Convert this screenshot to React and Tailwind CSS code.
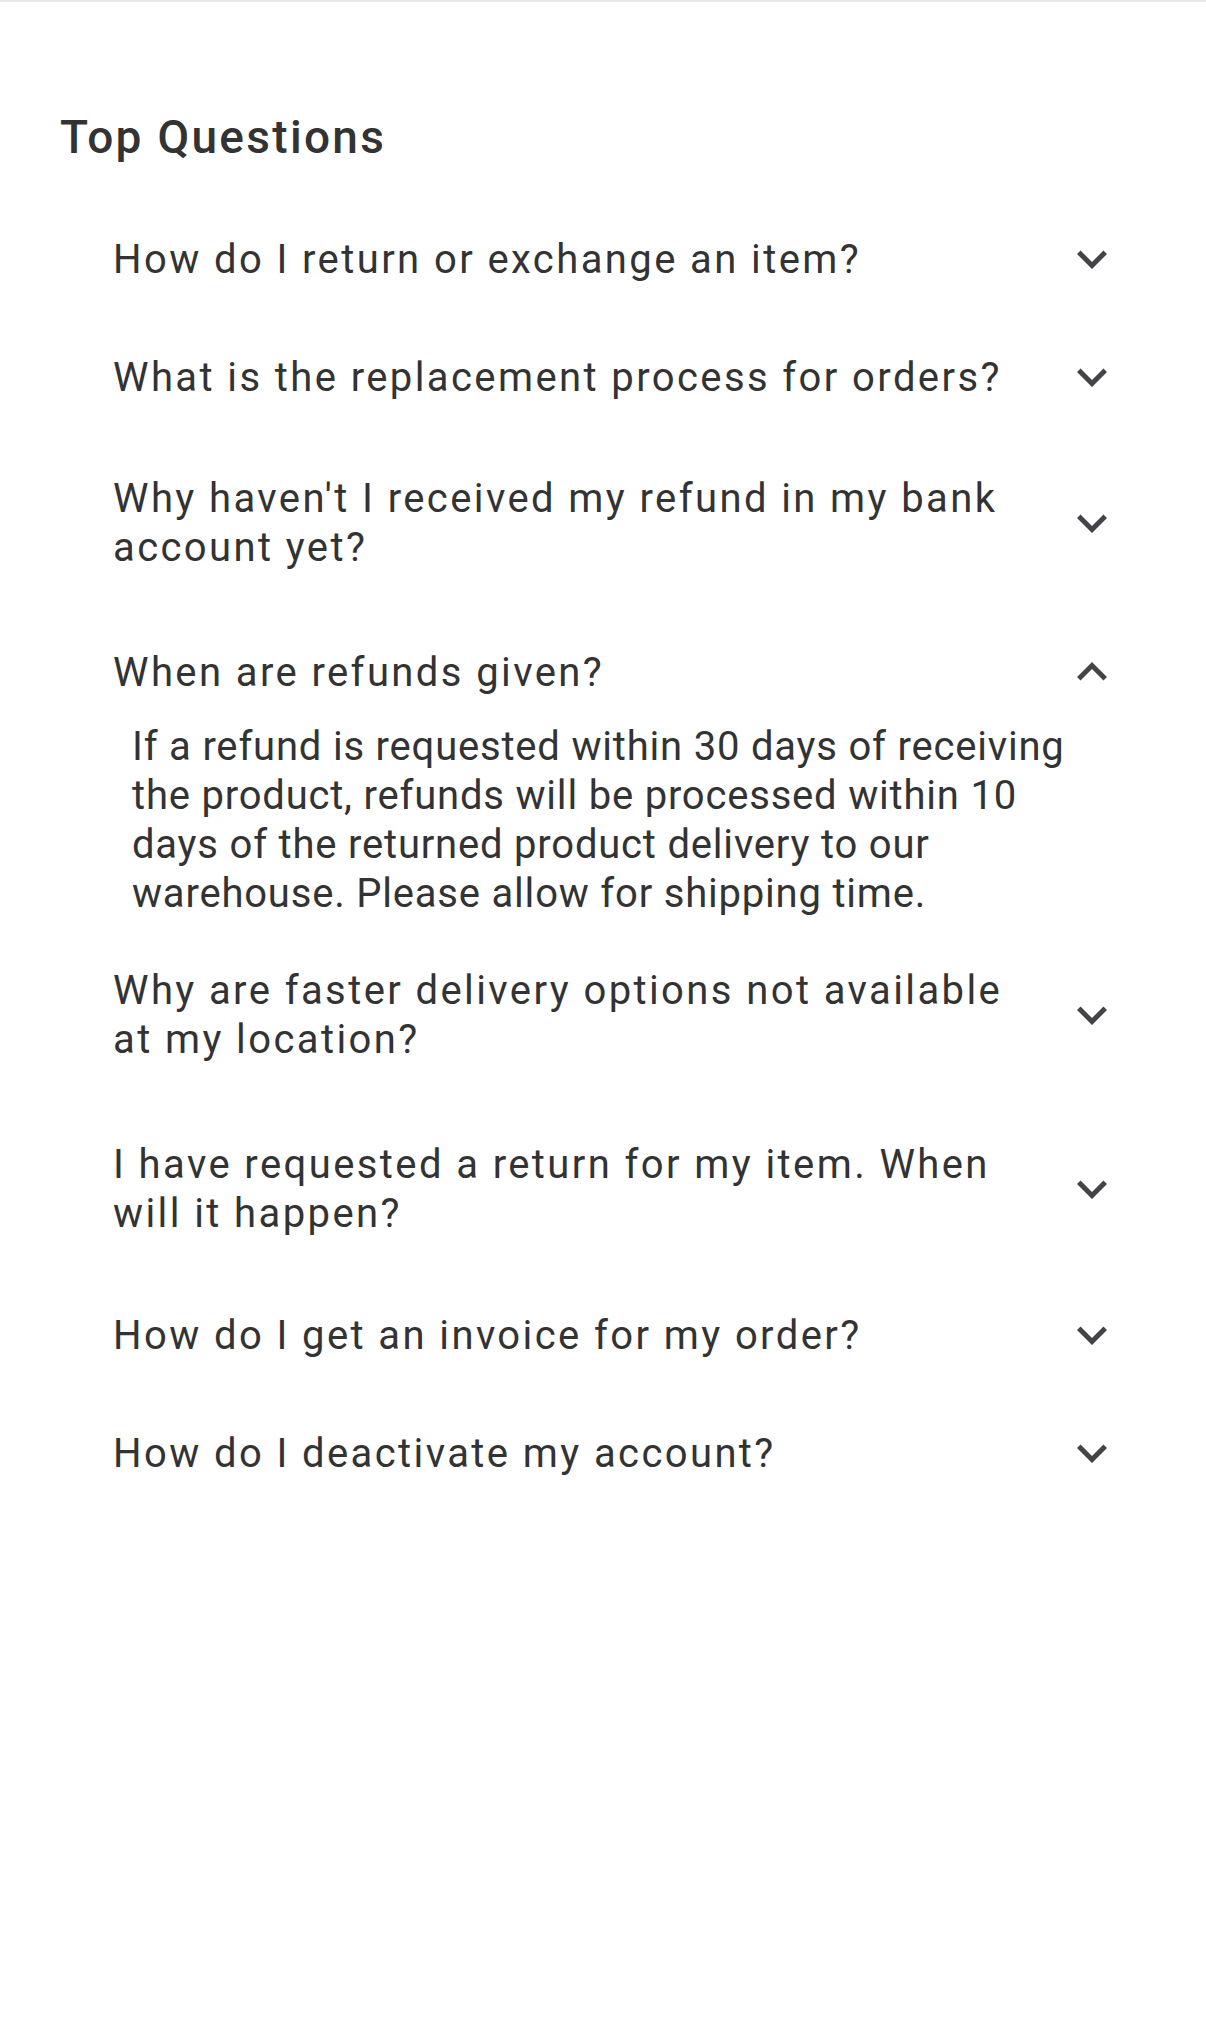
import { useState } from "react";

const faqs = [
  { q: "How do I return or exchange an item?", lines: 1 },
  { q: "What is the replacement process for orders?", lines: 1 },
  { q: "Why haven't I received my refund in my bank account yet?", lines: 2 },
  {
    q: "When are refunds given?",
    lines: 1,
    a: "If a refund is requested within 30 days of receiving the product, refunds will be processed within 10 days of the returned product delivery to our warehouse. Please allow for shipping time.",
  },
  { q: "Why are faster delivery options not available at my location?", lines: 2 },
  { q: "I have requested a return for my item. When will it happen?", lines: 2 },
  { q: "How do I get an invoice for my order?", lines: 1 },
  { q: "How do I deactivate my account?", lines: 1 },
];

function Chevron({ up }) {
  return (
    <svg className="w-[60px] h-[60px] shrink-0" viewBox="0 0 24 24" fill="#444448">
      {up ? (
        <path d="M12 8l-6 6 1.41 1.41L12 10.83l4.59 4.58L18 14z" />
      ) : (
        <path d="M16.59 8.59L12 13.17 7.41 8.59 6 10l6 6 6-6z" />
      )}
    </svg>
  );
}

export default function App() {
  const [open, setOpen] = useState(3);

  return (
    <div className="min-h-screen bg-white border-t-2 border-[#e8e8e8] font-['Roboto',sans-serif] text-[#333333]">
      <h2 className="pl-[60px] pt-[107px] text-[46px] leading-[56px] font-medium tracking-[0.05em]">
        Top Questions
      </h2>

      <div className="mt-[35px]">
        {faqs.map((item, i) => {
          const isOpen = open === i;
          let pad = item.lines === 2 ? "py-[38px]" : "py-[29px]";
          if (isOpen) pad = "pt-[32px] pb-[20px]";
          return (
            <div key={i} className={isOpen ? "pb-[10px]" : ""}>
              <button
                onClick={() => setOpen(isOpen ? -1 : i)}
                className={`w-full flex items-center pl-[113px] pr-[84px] text-left ${pad}`}
              >
                <span className="flex-1 pr-[32px] text-[40px] leading-[49px] tracking-[0.06em]">
                  {item.q}
                </span>
                <Chevron up={isOpen} />
              </button>
              {isOpen && item.a && (
                <p className="pl-[132px] pr-[108px] text-[40px] leading-[49px] tracking-[0.02em]">
                  {item.a}
                </p>
              )}
            </div>
          );
        })}
      </div>
    </div>
  );
}
